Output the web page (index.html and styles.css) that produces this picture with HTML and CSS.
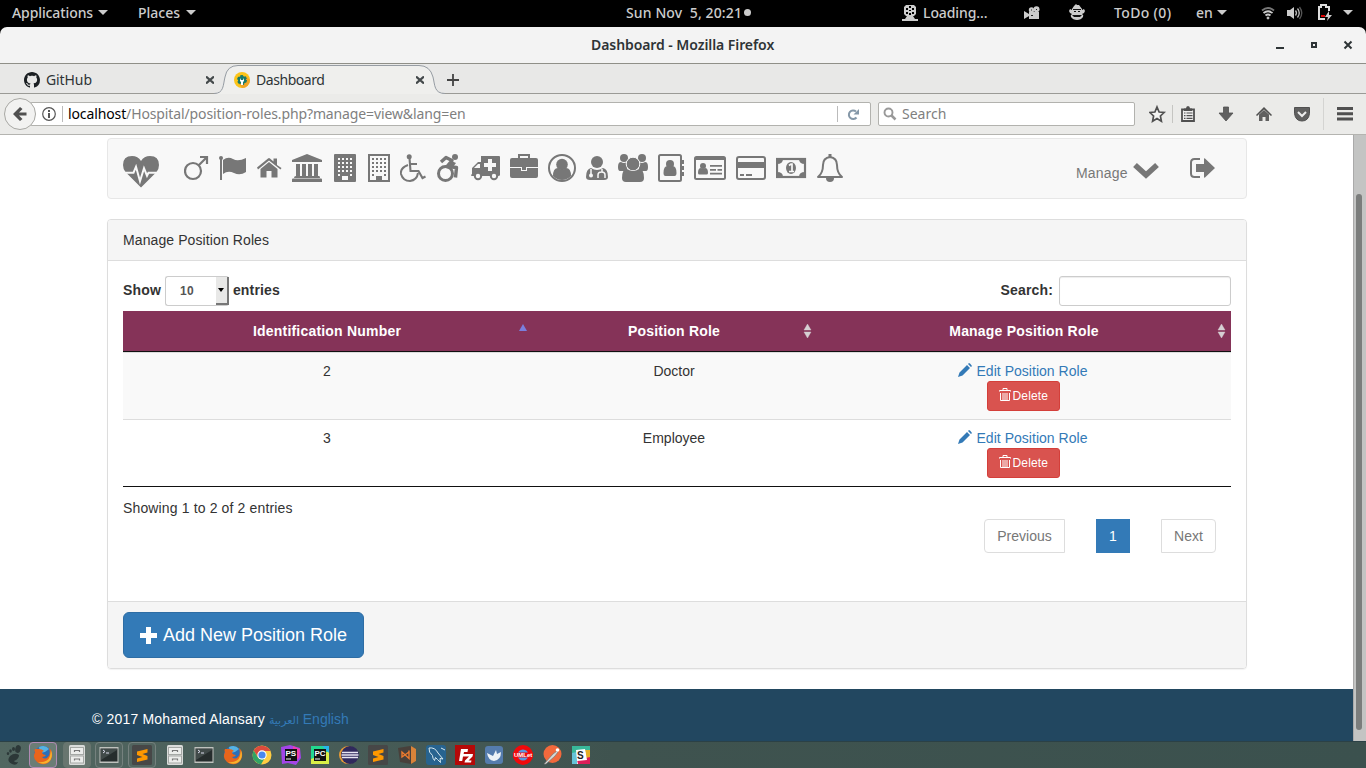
FILE: index.html
```html
<!DOCTYPE html>
<html lang="en">
<head>
<meta charset="utf-8">
<title>Dashboard</title>
<link rel="stylesheet" href="styles.css">
</head>
<body>
<header class="topbar">
  <div class="topbar-left"><span class="t-apps">Applications</span><i class="caret"></i><span class="t-places">Places</span><i class="caret"></i></div>
  <div class="clock">Sun Nov&nbsp; 5, 20:21<i class="dot"></i></div>
  <div class="tray">
    <svg width="20" height="18" viewBox="0 0 20 18"><path d="M0 15h16v2H0z" fill="#ccc"/><path d="M4 1h8l2 2v7l-2 2h-1l2 3H3l2-3H4l-2-2V3z" fill="#ccc"/><path d="M7 2h2v2H7zM4 4h2v2H4zm6 0h2v2h-2zM7 6h2v1H7zM4 8h2v2H4zm6 0h2v2h-2zM7 9h2v2H7z" fill="#000"/></svg>
    <span class="t-load">Loading...</span>
    <svg class="g-cam" width="16" height="14" viewBox="0 0 16 14"><path d="M5 6h10v7H5zM0 5l5 3v2l-5 3z" fill="#ccc"/><circle cx="7.500" cy="4" r="2.700" fill="#ccc"/><circle cx="12.500" cy="3.300" r="3" fill="#ccc"/><path d="M7 3.500h1v1H7zM12 3h1v1h-1zM7 9h2v1H7z" fill="#222"/></svg>
    <svg class="g-monkey" width="16" height="17" viewBox="0 0 16 17"><path d="M3 5l2-3 2-2 1 1h2l3 4v1l2-1 1 2-1 2-2 1q2 1 1 3-2 3-6 3t-6-3q-1-2 1-3L1 9 0 7l1-2 2 1z" fill="#ccc"/><path d="M4 5h8v1H4zM5 7h2v1H5zm4 0h2v1H9zM3 11h10l-2 2H5z" fill="#111"/></svg>
    <span class="t-todo">ToDo (0)</span><span class="t-en">en</span><i class="caret"></i>
    <svg class="g-wifi" width="14" height="14" viewBox="0 0 14 14" fill="none" stroke="#ccc" stroke-width="1.800"><path d="M1 4.500q6-5 12 0" stroke="#777"/><path d="M2.500 7q4.500-3.500 9 0M4.500 9.500q2.500-2 5 0"/><circle cx="7" cy="12" r="1" fill="#ccc" stroke-width="1"/></svg>
    <svg class="g-vol" width="16" height="14" viewBox="0 0 16 14"><path d="M0 4h3l4-3v12l-4-3H0z" fill="#ccc"/><path d="M8.500 4.500q2 2.500 0 5M10.500 2.500q3.500 4.500 0 9" fill="none" stroke="#bbb" stroke-width="1.300"/><path d="M12.500 1q4.500 6 0 12" fill="none" stroke="#555" stroke-width="1.300"/></svg>
    <svg class="g-bat" width="14" height="17" viewBox="0 0 14 17"><path d="M7 15H1V3h2V1h5v2h3v4" fill="none" stroke="#ddd" stroke-width="2"/><path d="M3 11h4v2H3z" fill="#d00"/><path d="M11 7l-4 6h3l-1 4 5-6h-3z" fill="#ccc"/></svg>
    <i class="caret last"></i>
  </div>
</header>
<div class="titlewrap"><div class="titlebar"><span>Dashboard - Mozilla Firefox</span>
  <svg class="winctl" width="74" height="12" viewBox="0 0 74 12"><path d="M0 8h8v2H0z" fill="#2e3436"/><path d="M36 4h4v4h-4z" fill="none" stroke="#2e3436" stroke-width="2"/><path d="M68.500 2.500l7 7m0-7l-7 7" stroke="#2e3436" stroke-width="2"/></svg>
</div></div>
<div class="tabs">
  <div class="tab tab-gh"><svg width="16" height="16" viewBox="0 0 16 16"><path fill="#1b1f23" fill-rule="evenodd" d="M8 0C3.580 0 0 3.580 0 8c0 3.540 2.290 6.530 5.470 7.590.4.070.55-.17.55-.38 0-.19-.01-.82-.01-1.490-2.010.37-2.530-.49-2.690-.94-.09-.23-.48-.94-.82-1.130-.28-.15-.68-.52-.01-.53.630-.01 1.080.580 1.230.820.720 1.210 1.870.870 2.330.660.070-.52.280-.87.510-1.070-1.780-.2-3.640-.89-3.640-3.950 0-.87.310-1.590.820-2.150-.08-.2-.36-1.020.080-2.120 0 0 .670-.21 2.200.820.640-.18 1.320-.27 2-.27s1.360.090 2 .270c1.530-1.040 2.200-.82 2.200-.82.440 1.100.160 1.920.080 2.120.510.560.820 1.270.820 2.150 0 3.070-1.870 3.750-3.650 3.950.290.250.540.730.540 1.480 0 1.070-.01 1.930-.01 2.200 0 .210.150.460.550.380A8.010 8.010 0 0 0 16 8c0-4.420-3.580-8-8-8z"/></svg><span>GitHub</span><svg class="x" width="8" height="8" viewBox="0 0 8 8"><path d="M0 0.500l8 7m0-7L0 7.500" stroke="#44494b" stroke-width="2.200"/></svg></div>
  <div class="tab tab-on"><svg class="tabshape" width="240" height="30" viewBox="0 0 240 30"><path d="M0 29.500C10 29.500 9 21 11 13Q13 1.500 24 1.500H205Q216 1.500 219 13C221 21 220 29.500 231 29.500V30H0z" fill="#efefed"/><path d="M0 29.500C10 29.500 9 21 11 13Q13 1.500 24 1.500H205Q216 1.500 219 13C221 21 220 29.500 231 29.500" fill="none" stroke="#969ca3"/></svg>
    <svg width="16" height="16" viewBox="0 0 16 16"><circle cx="8" cy="8" r="8" fill="#fcc419"/><path d="M8 16a8 8 0 0 0 8-8l-4-4-7 8z" fill="#f2a525"/><circle cx="8" cy="8" r="4" fill="#177a6b" stroke="#177a6b" stroke-width="2" stroke-dasharray="2.600 1.600"/><path d="M6 6v3l1 1v3h2v-3l1-1V6L9 8H7z" fill="#fff"/></svg><span class="t-dash">Dashboard</span><svg class="x" width="8" height="8" viewBox="0 0 8 8"><path d="M0 0.500l8 7m0-7L0 7.500" stroke="#44494b" stroke-width="2.200"/></svg></div>
  <svg class="plus" width="12" height="12" viewBox="0 0 12 12"><path d="M6 0v12M0 6h12" stroke="#444" stroke-width="1.800"/></svg>
</div>
<div class="toolbar">
  <div class="back"><svg width="14" height="16" viewBox="0 0 14 16"><path d="M13.500 6.500H6L9.500 3 7 1 0 8l7 7 2.500-2L6 9.500h7.500z" fill="#505050"/></svg></div>
  <div class="url"><svg width="14" height="14" viewBox="0 0 14 14"><circle cx="7" cy="7" r="6.300" fill="none" stroke="#555" stroke-width="1.200"/><path d="M6 3h2v2H6zm0 3h2v5H6z" fill="#555"/></svg><i class="vline"></i><span class="address"><b>localhost</b>/Hospital/position-roles.php?manage=view&amp;lang=en</span><i class="vline v2"></i><svg class="reload" width="13" height="13" viewBox="0 0 13 13"><path d="M9.500 9.500A4.300 4.300 0 1 1 9 3.500" fill="none" stroke="#8598a8" stroke-width="2"/><path d="M12 1v5.500H6.500z" fill="#8598a8"/></svg></div>
  <div class="find"><svg width="14" height="14" viewBox="0 0 14 14"><circle cx="5.500" cy="5.500" r="4" fill="none" stroke="#999" stroke-width="1.900"/><path d="M8.500 8.500l4 4" stroke="#999" stroke-width="2.500"/></svg><span>Search</span></div>
  <svg class="tools" width="210" height="38" viewBox="0 0 210 38"><g transform="translate(-1149 -95)">
    <path d="M1157 107l2.100 5 5 .5-3.700 3.500 1 5.200-4.400-2.700-4.400 2.700 1-5.200-3.700-3.500 5-.5z" fill="#f5f5f3" stroke="#505050" stroke-width="1.700"/>
    <path d="M1172.500 105v18" stroke="#c5c5c2"/>
    <path d="M1182 109.500h12V121h-12z" fill="#eee" stroke="#505050" stroke-width="1.800"/><path d="M1184 108.500h2q0-2.500 2-2.500t2 2.500h2v2.500h-8z" fill="#505050"/><path d="M1184 113h1.500m1 0h6m-8.500 2.700h1.500m1 0h6m-8.500 2.700h1.500m1 0h6" stroke="#505050" stroke-width="1.200"/>
    <path d="M1223.500 107h5v6h4.500l-7 8-7-8h4.500z" fill="#606060" stroke="#505050" stroke-width=".8"/>
    <path d="M1256 115l8-8 8 8-1 1-7-6.500-7 6.500z" fill="#505050"/><path d="M1259 114.500l5-4.500 5 4.500v6.500h-3.500v-4h-3v4h-3.500z" fill="#606060"/>
    <path d="M1294.500 107.500h15v6q-1 7.500-7.500 7.500t-7.500-7.500z" fill="#606060" stroke="#505050"/><path d="M1298 112l4 4 4-4" fill="none" stroke="#eee" stroke-width="2"/>
    <path d="M1323.500 98v32" stroke="#d4d4d2"/>
    <path d="M1337 108.500h16m-16 5.300h16m-16 5.300h16" stroke="#505050" stroke-width="3"/></g></svg>
</div>
<div class="viewport">
<main class="page">
  <nav class="navbar">
    <svg class="brand" width="36" height="32" viewBox="0 0 36 32"><path d="M18 5Q15 0 9 0 0 0 0 9q0 4 2.500 7L18 31.500 33.500 16Q36 13 36 9q0-9-9-9-6 0-9 5z" fill="#777"/><path d="M0 16.700h10.500l2.500-6 4 14.500 4-13 3 7.500 1.500-3H36" fill="none" stroke="#f8f8f8" stroke-width="2"/></svg>
    <div class="icons">
      <svg width="35" height="28" viewBox="0 0 35 28"><circle cx="9" cy="17" r="8" fill="none" stroke="#777" stroke-width="2.200"/><path d="M15 11l8-8M16 3h7v7" fill="none" stroke="#777" stroke-width="2.200"/></svg>
      <svg width="38" height="28" viewBox="0 0 38 28"><circle cx="2" cy="4" r="2" fill="#777"/><path d="M1 4h2v22H1zM4 6Q9 2 14 5t13-1v14q-6 4-12 1T4 20z" fill="#777"/></svg>
      <svg width="35" height="28" viewBox="0 0 35 28"><path d="M12 8l8.500 7v8.500h-6V17h-5v6.500h-6V15z" fill="#777"/><path d="M0 13.500L11 4.500q1-1 2 0l3.500 3V4.500h3.500v6.500l4.500 3-1 1.500L12 6.500 1 15.500z" fill="#777"/></svg>
      <svg width="42" height="28" viewBox="0 0 42 28" fill="#777"><path d="M15 0l15 6v2H0V6zM4 10h4v12h2V10h4v12h2V10h4v12h2V10h4v12h1q1 0 1 2H2q0-2 2-2zM0 25.500q0-1 1-1h28q1 0 1 1V28H0z"/></svg>
      <svg width="34" height="28" viewBox="0 0 34 28"><rect width="22" height="28" rx="1" fill="#777"/><path d="M4 5h14M4 9h14M4 13h14M4 17h14M4 21h2m10 0h2" stroke="#f8f8f8" stroke-width="2" stroke-dasharray="2 2"/><path d="M8 22h6v4H8z" fill="#f8f8f8"/></svg>
      <svg width="32" height="28" viewBox="0 0 32 28"><rect x="1" y="1" width="20" height="26" fill="none" stroke="#777" stroke-width="2"/><path d="M4 5h14M4 9h14M4 13h14M4 17h14M4 21h2m10 0h2" stroke="#777" stroke-width="2" stroke-dasharray="2 2"/><path d="M8 22h6v5H8z" fill="#777"/></svg>
      <svg width="37" height="28" viewBox="0 0 37 28"><circle cx="9.200" cy="2.800" r="2.500" fill="#777"/><path d="M9.500 4l1 13h8l4 7 3-1.500M10 10h7" fill="none" stroke="#777" stroke-width="2.100"/><path d="M8 11Q0 14 1 20q2 7 9 7 7-1 8-8" fill="none" stroke="#777" stroke-width="2"/></svg>
      <svg width="34" height="28" viewBox="0 0 34 28"><circle cx="18" cy="3" r="3" fill="#777"/><path d="M4 8l5-4.500 6 3-5 6 9.500 1-1 10" fill="none" stroke="#777" stroke-width="3.400" stroke-linejoin="round"/><path d="M14.500 7l-4.500 6h6l3-4z" fill="#777"/><circle cx="8.500" cy="19.500" r="7" fill="none" stroke="#777" stroke-width="3"/></svg>
      <svg width="39" height="28" viewBox="0 0 39 28"><path fill="#777" fill-rule="evenodd" d="M10 2h18q1 0 1 1v18q0 1-2 1H1q-1 0-1-1l1-1v-6l6-6h3zM3 14h6v-4H7zM21 5h-4v4h-4v4h4v4h4v-4h4V9h-4z"/><circle cx="7" cy="22" r="3.200" fill="#f8f8f8" stroke="#777" stroke-width="2"/><circle cx="23" cy="22" r="3.200" fill="#f8f8f8" stroke="#777" stroke-width="2"/></svg>
      <svg width="38" height="28" viewBox="0 0 38 28"><path d="M9 5V1h10v4" fill="none" stroke="#777" stroke-width="2"/><rect y="4" width="28" height="20" rx="2" fill="#777"/><path d="M0 13.500h28" stroke="#f8f8f8"/><path d="M11 13h6v4h-6z" fill="#f8f8f8"/><path d="M12 13h4v3h-4z" fill="#777"/></svg>
      <svg width="38" height="28" viewBox="0 0 38 28"><circle cx="14" cy="14" r="13" fill="none" stroke="#777" stroke-width="2"/><circle cx="14" cy="10.500" r="5.800" fill="#777"/><path d="M5 22q0-8 5-8 4 3 8 0 5 0 5 8-4 4-9 4t-9-4z" fill="#777"/></svg>
      <svg width="32" height="28" viewBox="0 0 32 28"><circle cx="11" cy="8" r="6" fill="#777"/><path d="M5 14q6 4 12 0 5 1 5 9 0 3-4 3H4q-4 0-4-3 0-8 5-9z" fill="#777"/><path d="M5 15v5M16 15v3m-4 6v-3q0-3 3.500-3t3.500 3v3" fill="none" stroke="#f8f8f8" stroke-width="1.500"/><circle cx="5" cy="21.500" r="2" fill="#f8f8f8"/></svg>
      <svg width="40" height="28" viewBox="0 0 40 28" fill="#777"><circle cx="6" cy="4" r="4"/><circle cx="24" cy="4" r="4"/><path d="M0 13q0-5 3-5 3 2 6 0 0 5 0 9H2q-2 0-2-4zM30 13q0-5-3-5-3 2-6 0v9h7q2 0 2-4z"/><circle cx="15" cy="10" r="6.800" stroke="#f8f8f8"/><path d="M4 24q0-9 5-9 6 4 12 0 5 0 5 9 0 4-4 4H8q-4 0-4-4z"/></svg>
      <svg width="36" height="28" viewBox="0 0 36 28"><rect x="1" y="1" width="22" height="26" rx="1.500" fill="none" stroke="#777" stroke-width="2"/><path d="M24 6h2v4h-2zm0 6h2v4h-2zm0 6h2v4h-2z" fill="#777"/><circle cx="12" cy="10" r="4" fill="#777"/><path d="M5.500 19q0-7 4-7 2.500 2 5 0 4 0 4 7 0 3-2 3h-9q-2 0-2-3z" fill="#777"/></svg>
      <svg width="42" height="28" viewBox="0 0 42 28"><rect x="1" y="3" width="30" height="22" rx="1.500" fill="none" stroke="#777" stroke-width="2"/><path d="M1 3h30v3H1z" fill="#777"/><circle cx="9" cy="12" r="3" fill="#777"/><path d="M4 19q0-5 3-5 2 1 4 0 3 0 3 5 0 1.500-1.500 1.500h-7Q4 20.500 4 19zM16 11h12v1.700H16zm0 4h6v1.700h-6zm7.500 0H28v1.700h-4.500zM16 18.700h12v1.700H16z" fill="#777"/></svg>
      <svg width="40" height="28" viewBox="0 0 40 28"><rect x="1" y="3" width="28" height="22" rx="2" fill="none" stroke="#777" stroke-width="2"/><path d="M1 8h28v6H1zM4 20h4v2H4zm6 0h6v2h-6z" fill="#777"/></svg>
      <svg width="41" height="28" viewBox="0 0 41 28"><rect x="1" y="5" width="28" height="18" fill="none" stroke="#777" stroke-width="2.200"/><path d="M1 5h6q0 5-6 5zm28 0h-6q0 5 6 5zM1 23h6q0-5-6-5zm28 0h-6q0-5 6-5z" fill="#777"/><ellipse cx="15" cy="14" rx="5" ry="6" fill="#777"/><path d="M13 11.500l2-1.500h1v7.500m-3 0h5" fill="none" stroke="#f8f8f8" stroke-width="1.700"/></svg>
      <svg width="26" height="28" viewBox="0 0 26 28"><path d="M13 0v3" stroke="#777" stroke-width="3"/><path d="M13 3Q6 4 6 11q0 8-5 12h24q-5-4-5-12 0-7-7-8z" fill="none" stroke="#777" stroke-width="2" stroke-linejoin="round"/><path d="M9 24h8q0 4-4 4t-4-4z" fill="#777"/></svg>
    </div>
    <a class="manage">Manage</a>
    <svg class="chev" width="26" height="17" viewBox="0 0 26 17"><path d="M2 3l11 10L24 3" fill="none" stroke="#777" stroke-width="5.600"/></svg>
    <svg class="out" width="26" height="20" viewBox="0 0 26 20"><path d="M10 1H4.500Q1 1 1 4.500v11Q1 19 4.500 19H10" fill="none" stroke="#777" stroke-width="2"/><path d="M6 6h8V1q0-1 1-.5l10 9.500-10 9.500q-1 .5-1-.5v-5H6z" fill="#777"/></svg>
  </nav>
  <section class="panel">
    <div class="panel-heading">Manage Position Roles</div>
    <div class="panel-body">
      <div class="controls"><label>Show</label><div class="select"><span>10</span><i><b></b></i></div><label>entries</label><label class="slabel">Search:</label><input class="search" type="text"></div>
      <table class="grid">
        <colgroup><col class="c1"><col class="c2"><col class="c3"></colgroup>
        <thead><tr><th>Identification Number<i class="up"></i></th><th>Position Role<svg width="9" height="16" viewBox="0 0 9 16"><path d="M1 7l3.500-6L8 7zM1 9h7l-3.500 6z" fill="#d6d0d3" stroke="#d6d0d3" stroke-width=".4"/></svg></th><th>Manage Position Role<svg width="9" height="16" viewBox="0 0 9 16"><path d="M1 7l3.500-6L8 7zM1 9h7l-3.500 6z" fill="#d6d0d3" stroke="#d6d0d3" stroke-width=".4"/></svg></th></tr></thead>
        <tbody>
          <tr class="odd"><td>2</td><td>Doctor</td><td><a class="edit"><svg width="14" height="14" viewBox="0 0 14 14"><path d="M0 14l1.500-4.500L9 2l3 3-7.500 7.500zM10 1l1-1q1 0 3 3l-1 1z" fill="#337ab7"/></svg>Edit Position Role</a><br><a class="del"><svg width="12" height="13" viewBox="0 0 12 13"><path d="M.5 3.500V2.500h11v1M4 2V.5h4V2M1.500 5v7.500h9V5M4 5v7m2-7v7m2-7v7" fill="none" stroke="#fff"/></svg>Delete</a></td></tr>
          <tr><td>3</td><td>Employee</td><td><a class="edit"><svg width="14" height="14" viewBox="0 0 14 14"><path d="M0 14l1.500-4.500L9 2l3 3-7.500 7.500zM10 1l1-1q1 0 3 3l-1 1z" fill="#337ab7"/></svg>Edit Position Role</a><br><a class="del"><svg width="12" height="13" viewBox="0 0 12 13"><path d="M.5 3.500V2.500h11v1M4 2V.5h4V2M1.500 5v7.500h9V5M4 5v7m2-7v7m2-7v7" fill="none" stroke="#fff"/></svg>Delete</a></td></tr>
        </tbody>
      </table>
      <div class="info">Showing 1 to 2 of 2 entries</div>
      <div class="pager"><a class="prev">Previous</a><a class="cur">1</a><a class="next">Next</a></div>
    </div>
    <div class="panel-footer"><a class="add"><svg width="17" height="17" viewBox="0 0 17 17"><path d="M6 0h5v6h6v5h-6v6H6v-6H0V6h6z" fill="#fff"/></svg>Add New Position Role</a></div>
  </section>
  <footer class="foot"><span class="copy">© 2017 Mohamed Alansary</span> <a class="ar">العربية</a> <a>English</a></footer>
</main>
<div class="scroll"><i></i></div>
</div>
<svg width="0" height="0" class="defs"><defs>
  <g id="fox"><circle cx="10" cy="10" r="9" fill="#2b6fb8"/><path d="M6 2q6-3 10 2l-4 3-5 1z" fill="#55b3e4"/><path d="M2 4q-1 2 0 3Q-1 13 4 17t11 1q5-4 4-10-1-4-3-5 2 6-1 9t-6 0q3 0 4-2-3 0-4-2 0-2 2-2-2-2-5-2z" fill="#e8651b"/><path d="M18 5q3 9-4 13-5 2-9-1 10 1 12-6z" fill="#f7b32c"/></g>
  <g id="cab"><rect x="2" y="0" width="16" height="20" rx="1.500" fill="#d9dbd9"/><rect x="3.500" y="2.500" width="13" height="7" fill="#ecedeb" stroke="#a5a8a5"/><rect x="3.500" y="11" width="13" height="7" fill="#ecedeb" stroke="#a5a8a5"/><path d="M7.500 7V5.500h5V7M7.500 15.500V14h5v1.500" fill="none" stroke="#777" stroke-width="1.200"/></g>
  <g id="term"><rect x=".5" y="2" width="19" height="16" fill="#bfc2be"/><rect x="1.500" y="3.500" width="17" height="13" fill="#262d2d"/><path d="M2 15L18 5v-1H2z" fill="#414a49"/><path d="M4 5l2 1.500L4 8m3 0h3" fill="none" stroke="#dde"/></g>
  <g id="subl"><rect width="20" height="20" rx="1.500" fill="#474747"/><path d="M15.500 4v3.500L10.500 9l5 2v3.500L5 17v-3.500l5.500-1.500-5.500-2V6.500z" fill="#ff9800"/></g>
</defs></svg>
<footer class="taskbar">
  <div class="app"><svg viewBox="0 0 20 20"><g fill="#2c3838"><ellipse cx="14" cy="4" rx="2.700" ry="4" transform="rotate(15 14 4)"/><ellipse cx="9.500" cy="4" rx="1.500" ry="2"/><ellipse cx="6.500" cy="6" rx="1.300" ry="1.800"/><ellipse cx="4" cy="8.500" rx="1.200" ry="1.600"/><path d="M15 10Q11 7 6 11q-4 5 2 8 5 2 6-2-3 1-4-1 5-2 5-6z"/></g></svg></div>
  <div class="app win active"><svg viewBox="0 0 20 20"><use href="#fox"/></svg></div>
  <div class="app win m6 lite"><svg viewBox="0 0 20 20"><use href="#cab"/></svg></div>
  <div class="app win m4"><svg viewBox="0 0 20 20"><use href="#term"/></svg></div>
  <div class="app win m5"><svg viewBox="0 0 20 20"><use href="#subl"/></svg></div>
  <div class="app m5"><svg viewBox="0 0 20 20"><use href="#cab"/></svg></div>
  <div class="app"><svg viewBox="0 0 20 20"><use href="#term"/></svg></div>
  <div class="app"><svg viewBox="0 0 20 20"><use href="#fox"/></svg></div>
  <div class="app"><svg viewBox="0 0 20 20"><circle cx="10" cy="10" r="9.500" fill="#ffcd42"/><path d="M1.700 5.500A9.500 9.500 0 0 1 18.500 6H10L6 12z" fill="#dd4b3d"/><path d="M1.700 5.500Q-2 14 6 18.500l3 1 4-7-7 0z" fill="#32a365"/><circle cx="10" cy="10" r="4.700" fill="#fff"/><circle cx="10" cy="10" r="3.600" fill="#4a87ef"/></svg></div>
  <div class="app"><svg viewBox="0 0 20 20"><path d="M0 2L9 0l10 3 1 10-5 7-8-2-6 1z" fill="#a345e8"/><path d="M12 1l7 3-1 9-6 4z" fill="#ee3eb0"/><path d="M4 4h12v12H4z" fill="#111"/><text x="4.500" y="11" class="logo-ps">PS</text><path d="M5 13.500h5v1H5z" fill="#fff"/></svg></div>
  <div class="app"><svg viewBox="0 0 20 20"><path d="M1 1h18v18H1z" fill="#22d88f"/><path d="M1 14l8-3 10-5v13H1z" fill="#d9ef47"/><path d="M12 1h7v7z" fill="#27b5e9"/><path d="M4 4h12v12H4z" fill="#111"/><text x="4.500" y="11" class="logo-ps">PC</text><path d="M5 13.500h5v1H5z" fill="#fff"/></svg></div>
  <div class="app"><svg viewBox="0 0 20 20"><circle cx="9" cy="10" r="9" fill="#e89b35"/><circle cx="11" cy="10" r="9" fill="#30295c"/><path d="M3 7.500h16M2.500 10h17M3 12.500h16" stroke="#e8e5f2" stroke-width="1.400"/></svg></div>
  <div class="app"><svg viewBox="0 0 20 20"><use href="#subl"/></svg></div>
  <div class="app"><svg viewBox="0 0 20 20"><path d="M1 3l12-2 6 3v12l-5 3-11-2z" fill="#48403b"/><path d="M14 1l5 3v12l-5 3z" fill="#d98339"/><path d="M12 5.500v8L5 7v5l7-5" fill="none" stroke="#ef7b2e" stroke-width="1.400"/></svg></div>
  <div class="app"><svg viewBox="0 0 20 20"><rect width="20" height="20" rx="3" fill="#27638f"/><path d="M3 3q6-1 9 5l5 6-3-.5.500 4-3-3-2-2-1 3q-2-2-2-5-4-3-3.500-7.500M15 3l4 2" fill="none" stroke="#d7e9f0"/></svg></div>
  <div class="app"><svg viewBox="0 0 20 20"><path d="M0 0h20v20H0z" fill="#b50908"/><path d="M4 16L6 4h7l-.5 3H9l-.4 2H12l-.5 2.500H8L7.200 16zM11.500 9H18l-.5 2.500-4 4h3l-.5 2H9.500l.5-2 4-4H11z" fill="#fff"/></svg></div>
  <div class="app"><svg viewBox="0 0 20 20"><rect x="1" y="1" width="18" height="18" rx="3" fill="#557cad"/><path d="M3 8l6 3 3-6 1 4 4-2q0 8-7 9-6-1-7-8z" fill="#eef3f7"/></svg></div>
  <div class="app"><svg viewBox="0 0 20 20"><circle cx="10" cy="10" r="10" fill="#f1090b"/><circle cx="10" cy="10" r="5.500" fill="#5899e0"/><path d="M0 7.500h20v5H0z" fill="#f1090b"/><text x="1" y="12" class="logo-uml">UMLet</text></svg></div>
  <div class="app"><svg viewBox="0 0 20 20"><circle cx="10.500" cy="9" r="9" fill="#f2693c"/><path d="M2 19L11 9l4-3 1 1-3 4L4 19z" fill="#d7dad7" stroke="#777" stroke-width=".7"/><circle cx="15.500" cy="5" r="1.800" fill="#fff"/></svg></div>
  <div class="app"><svg viewBox="0 0 20 20"><path d="M1 1h18v18H1z" fill="#fff"/><path d="M1 1h18v5L1 9z" fill="#38b89a"/><path d="M1 8l5-1v12H1z" fill="#65c4d8"/><path d="M14 5h5v8h-4z" fill="#e7ad25"/><path d="M6 15l13-3v7H7z" fill="#dc1d58"/><path d="M5 5l9-1 2 11-10 1z" fill="#fff"/><text x="6" y="14" class="logo-s">S</text></svg></div>
</footer>
</body>
</html>
```
FILE: styles.css
```css
* { box-sizing: border-box; }
body { margin: 0; width: 1366px; height: 768px; overflow: hidden; display: flex; flex-direction: column; font: 14px/20px "Liberation Sans", Arial, sans-serif; color: #333; background: #fff; }
svg { display: block; flex: none; }
.defs { position: absolute; }
.topbar, .titlebar, .tabs, .toolbar { font-family: "Noto Sans", "Open Sans", sans-serif; font-size: 14px; white-space: nowrap; }
.topbar { height: 27px; flex: none; background: #000; color: #ccc; display: grid; grid-template-columns: 626px 276px 464px; align-items: center; font-weight: 500; padding-bottom: 2px; }
.topbar-left, .clock, .tray { display: flex; align-items: center; }
.topbar-left { padding-left: 12px; }
.caret { border: 5px solid transparent; border-top-color: #ccc; border-bottom: 0; margin-left: 5px; flex: none; }
.t-apps { width: 81px; letter-spacing: -.1px; }
.t-places { width: 43px; margin-left: 30px; }
.clock { letter-spacing: .12px; }
.dot { width: 7px; height: 7px; border-radius: 50%; background: #ccc; margin-left: 2px; }
.t-load { width: 64px; margin-left: 1px; letter-spacing: -.1px; }
.g-cam { margin-left: 37px; }
.g-monkey { margin-left: 29px; }
.t-todo { width: 57px; margin-left: 29px; letter-spacing: .35px; }
.t-en { width: 16px; margin-left: 25px; }
.g-wifi { margin-left: 34px; }
.g-vol { margin-left: 12px; }
.g-bat { margin-left: 15px; }
.caret.last { margin-left: 11px; }
.titlewrap { background: #000; height: 36px; flex: none; }
.titlebar { height: 36px; border-radius: 7px 7px 0 0; background: #f3f3f3; display: grid; grid-template-columns: 591px 685px 1fr; align-items: center; font-weight: 600; color: #2e3436; letter-spacing: -.07px; }
.titlebar span { grid-column: 2; }
.winctl { overflow: visible; }
.tabs { height: 31px; flex: none; display: flex; align-items: center; background: #e8e8e7; border-top: 1px solid #8f8f88; border-bottom: 1px solid #9a9a96; color: #2e3436; padding-top: 2px; }
.tab { display: flex; align-items: center; position: relative; }
.tab span { position: relative; margin-left: 6px; flex: 1; letter-spacing: -.1px; }
.tab .t-dash { letter-spacing: -.45px; }
.tab svg { position: relative; }
.tab-gh { margin-left: 24px; width: 190px; }
.tab-on { margin-left: 20px; width: 190px; }
.tab svg.tabshape { position: absolute; left: -20px; top: -6px; }
.plus { margin-left: 23px; }
.toolbar { height: 41px; flex: none; background: #ebebe9; border-bottom: 1px solid #b4b4b0; display: flex; align-items: center; color: #808080; }
.back { width: 32px; height: 32px; margin-left: 4px; border: 1px solid #a8a8a4; border-radius: 50%; background: #f2f2f1; display: flex; align-items: center; justify-content: center; z-index: 1; }
.url { margin-left: -6px; width: 841px; height: 24px; background: #fff; border: 1px solid #b2b2ae; border-radius: 2px; display: flex; align-items: center; padding-left: 11px; }
.vline { width: 1px; height: 16px; background: #bbb; margin-left: 6px; }
.v2 { margin-left: 0; }
.address { margin-left: 5px; width: 769px; letter-spacing: -.12px; }
.address b { color: #000; font-weight: 400; }
.reload { margin-left: 9px; }
.find { width: 257px; height: 24px; margin-left: 7px; border: 1px solid #b2b2ae; border-radius: 2px; background: #fff; display: flex; align-items: center; padding-left: 4px; }
.find span { margin-left: 5px; }
.tools { margin-left: 14px; }
.viewport { height: 606px; flex: none; display: flex; }
.page { width: 1353px; display: flex; flex-direction: column; padding-top: 3px; }
.scroll { width: 13px; background: #c3c4c3; border-left: 1px solid #aaa; padding: 59px 0 0 2px; }
.scroll i { display: block; width: 6px; height: 536px; border-radius: 3px; background: #7b7d7c; }
.navbar { width: 1140px; height: 61px; margin-left: 107px; border: 1px solid #e7e7e7; border-radius: 4px; background: #f8f8f8; display: flex; align-items: flex-start; padding: 15px 0 0 15px; color: #777; }
.brand { margin-top: 2px; }
.icons { display: flex; margin-left: 25px; }
.manage { margin: 9px 0 0 233px; width: 57px; letter-spacing: .2px; }
.chev { margin-top: 8px; }
.out { margin: 4px 0 0 31px; }
.panel { width: 1140px; height: 450px; margin: 20px 0 0 107px; border: 1px solid #ddd; border-radius: 4px; box-shadow: 0 1px 1px rgba(0,0,0,.05); display: flex; flex-direction: column; overflow: hidden; flex: none; }
.panel-heading { height: 41px; background: #f5f5f5; border-bottom: 1px solid #ddd; padding: 10px 15px; letter-spacing: .1px; }
.panel-body { flex: 1; padding: 15px; }
.controls { display: flex; height: 30px; align-items: center; font-weight: 700; letter-spacing: .15px; }
.controls label { margin-top: -2px; }
.select { width: 64px; height: 30px; margin: 0 4px; border: 1px solid #ccc; border-right: 0; border-radius: 3px; display: flex; font-size: 12px; color: #555; }
.select span { flex: 1; padding: 4px 0 0 14px; letter-spacing: .3px; }
.select i { width: 13px; background: #e8e8e7; border-right: 2px solid #777; border-bottom: 2px solid #777; display: flex; align-items: center; justify-content: center; }
.select b { border: 3.5px solid transparent; border-top: 4px solid #000; border-bottom: 0; }
.slabel { margin-left: auto; }
.search { width: 172px; height: 30px; border: 1px solid #ccc; border-radius: 3px; margin-left: 6px; box-shadow: inset 0 1px 1px rgba(0,0,0,.075); background: #fff; }
.grid { width: 1108px; margin-top: 5px; table-layout: fixed; border-collapse: separate; border-spacing: 0; text-align: center; border-bottom: 1px solid #111; }
.c1 { width: 408px; }
.c2 { width: 286px; }
.c3 { width: 414px; }
.grid th { height: 41px; padding: 0; position: relative; background: #853358; color: #fff; border-bottom: 1px solid #111; letter-spacing: .2px; }
.grid th svg { position: absolute; right: 5px; top: 12px; }
.up { position: absolute; right: 4px; top: 13px; border: 4.5px solid transparent; border-bottom: 7px solid #7a7fdd; border-top: 0; }
.grid td { height: 67px; padding: 8px 0 0; border-top: 1px solid #ddd; vertical-align: top; }
.grid td:last-child { padding-right: 2px; }
.odd td { background: #f9f9f9; }
.edit { color: #337ab7; display: inline-flex; align-items: center; height: 20px; vertical-align: top; letter-spacing: .03px; }
.edit svg { margin: -2px 4px 0 0; }
.del { display: inline-flex; width: 73px; height: 30px; background: #d9534f; border: 1px solid #d43f3a; border-radius: 3px; color: #fff; font-size: 12px; line-height: 18px; padding: 5px 10px; vertical-align: top; letter-spacing: .15px; }
.del svg { margin: 1px 2px 0 1px; }
.info { padding-top: 11px; height: 32px; letter-spacing: .14px; }
.pager { display: flex; justify-content: flex-end; padding-right: 15px; color: #777; }
.pager a { height: 34px; border: 1px solid #ddd; padding: 6px 0; text-align: center; background: #fff; }
.pager .prev { width: 81px; border-radius: 4px 0 0 4px; }
.pager .cur { width: 34px; margin: 0 31px; background: #337ab7; border-color: #337ab7; color: #fff; }
.pager .next { width: 55px; border-radius: 0 4px 4px 0; }
.panel-footer { height: 67px; border-top: 1px solid #ddd; background: #f5f5f5; padding: 10px 15px; }
.add { display: flex; width: 241px; height: 46px; align-items: center; justify-content: center; background: #337ab7; border: 1px solid #2e6da4; border-radius: 6px; color: #fff; font-size: 18px; }
.add svg { margin-right: 6px; }
.foot { margin-top: 20px; height: 52px; background: #224760; color: #fff; padding: 20px 92px; }
.copy { letter-spacing: .17px; }
.foot a { color: #337ab7; }
.foot .ar { font-family: "DejaVu Sans", sans-serif; font-size: 11px; display: inline-block; width: 30px; line-height: 16px; white-space: nowrap; }
.taskbar { height: 27px; flex: none; display: flex; background: linear-gradient(90deg, #526761, #3f534f 45%, #3b514e); border-top: 1px solid #2b4146; }
.app { width: 28px; height: 26px; margin-left: 1px; display: flex; align-items: center; justify-content: center; flex: none; }
.app:first-child { margin-left: 0; }
.app svg { width: 20px; height: 20px; }
.app.m6 { margin-left: 6px; }
.app.m4 { margin-left: 4px; }
.app.m5 { margin-left: 5px; }
.win { border: 1px solid #75817e; border-radius: 4px; background: #536560; }
.active { border-color: #b08bb4; background: #6b7d76; }
.lite { border-color: #68756f; background: #68766f; }
.logo-ps { font: 700 8px "Liberation Sans", sans-serif; fill: #fff; }
.logo-uml { font: 700 6px "Liberation Sans", sans-serif; fill: #fff; }
.logo-s { font: 700 10px "Liberation Sans", sans-serif; fill: #222; }
```
